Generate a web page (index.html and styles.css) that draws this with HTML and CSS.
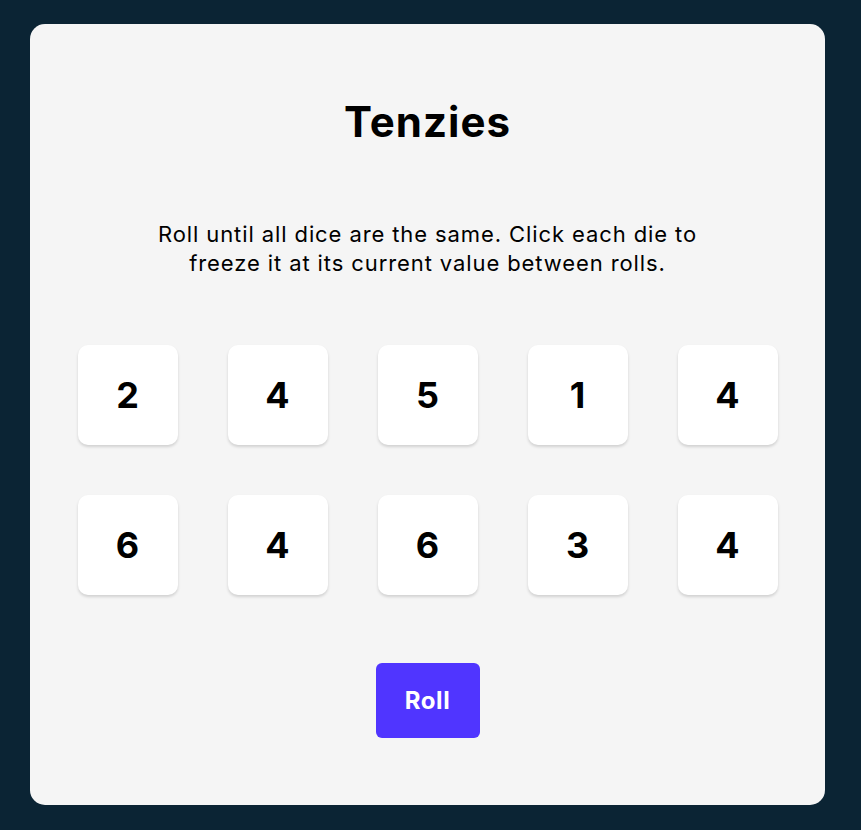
FILE: index.html
```html
<!DOCTYPE html>
<html>
<head>
<meta charset="utf-8">
<link rel="stylesheet" href="styles.css">
</head>
<body>
<main class="card">
  <h1 class="title">Tenzies</h1>
  <p class="instructions">Roll until all dice are the same. Click each die to freeze it at its current value between rolls.</p>
  <div class="dice">
    <button class="die">2</button>
    <button class="die">4</button>
    <button class="die">5</button>
    <button class="die">1</button>
    <button class="die">4</button>
    <button class="die">6</button>
    <button class="die">4</button>
    <button class="die">6</button>
    <button class="die">3</button>
    <button class="die">4</button>
  </div>
  <button class="roll">Roll</button>
</main>
</body>
</html>
```
FILE: styles.css
```css
html, body {
  margin: 0;
  padding: 0;
}
body {
  background: #0B2434;
  font-family: Inter, "Liberation Sans", sans-serif;
  padding: 24px 36px 25px 30px;
}
.card {
  background: #F5F5F5;
  border-radius: 15px;
  height: 781px;
  box-sizing: border-box;
  display: flex;
  flex-direction: column;
  align-items: center;
  padding-top: 72px;
}
.title {
  margin: 0;
  font-size: 42px;
  font-weight: 700;
  line-height: 52px;
  letter-spacing: 1px;
  color: #000;
}
.instructions {
  margin: 72px 0 0;
  width: 580px;
  text-align: center;
  font-size: 22px;
  letter-spacing: 0.9px;
  line-height: 29px;
  color: #000;
}
.dice {
  margin-top: 67px;
  display: grid;
  grid-template-columns: repeat(5, 100px);
  grid-auto-rows: 100px;
  gap: 50px;
}
.die {
  border: none;
  background: #FFFFFF;
  border-radius: 10px;
  box-shadow: 0 2px 3px rgba(0, 0, 0, 0.15);
  font-family: Inter, "Liberation Sans", sans-serif;
  font-size: 36px;
  font-weight: 700;
  color: #000;
  padding: 0;
}
.roll {
  margin-top: 68px;
  width: 104px;
  height: 75px;
  border: none;
  border-radius: 6px;
  background: #5035FF;
  color: #fff;
  font-family: Inter, "Liberation Sans", sans-serif;
  font-size: 24px;
  font-weight: 700;
  letter-spacing: 0.6px;
  padding: 0;
}
```
